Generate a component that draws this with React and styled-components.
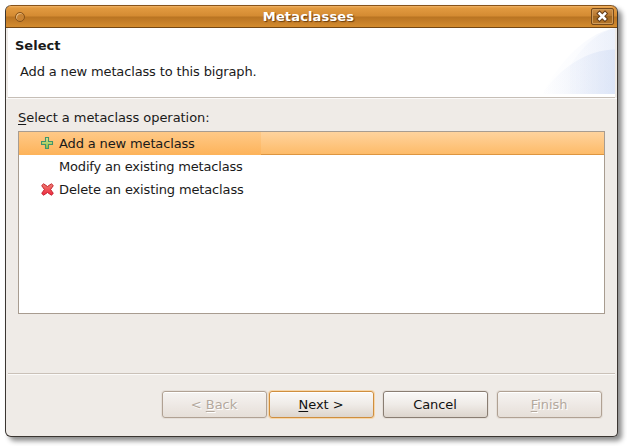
import React from "react";
import styled, { createGlobalStyle } from "styled-components";

const GlobalStyle = createGlobalStyle`
  * { box-sizing: border-box; }
  html, body { margin: 0; background: #fff; overflow: hidden; }
  body { font-family: "DejaVu Sans", sans-serif; font-size: 13px; color: #1a1a1a; }
`;

const Desktop = styled.div`
  width: 627px;
  height: 446px;
  padding: 5px;
`;

const Window = styled.section`
  display: flex;
  flex-direction: column;
  width: 613px;
  height: 432px;
  overflow: hidden;
  background: #efebe7;
  border: 1px solid #3b3632;
  border-top: 0;
  border-radius: 6px 7px 5px 6px;
  box-shadow: 4px 4px 5px rgba(0, 0, 0, 0.45);
`;

const TitleBar = styled.header`
  display: grid;
  grid-template-columns: 30px 1fr 28px;
  align-items: center;
  flex: none;
  height: 23px;
  margin: 0 -1px;
  border: 1px solid #87531a;
  border-bottom-color: #744714;
  border-radius: 6px 7px 0 0;
  background: linear-gradient(#f0b469 0, #e29a40 2px, #d48b32 10px, #b97422 11px, #c67f29 16px, #d48c2e 21px);
`;

const Title = styled.h1`
  margin: 0 8px 0 0;
  text-align: center;
  font-size: 13px;
  line-height: 18px;
  letter-spacing: 0.15px;
  color: #fff;
  text-shadow: 1px 1px 1px #6b3d0d;
`;

const MenuDot = styled.span`
  width: 10px;
  height: 10px;
  margin-left: 9px;
  border: 1px solid #875219;
  border-radius: 50%;
  background: #c98434;
  box-shadow: inset 1px 1px 0 #e9bd80;
`;

const CloseButton = styled.button`
  width: 23px;
  height: 17px;
  margin: 0 0 0 2px;
  padding: 0;
  border: 1px solid #75491a;
  border-radius: 2px;
  background: linear-gradient(#cf9149, #b87830 45%, #9f6721 50%, #b67529);
  box-shadow: inset 0 0 0 1px #cf9a58;
  svg { display: block; margin: 0 auto; }
`;

const Banner = styled.div`
  display: flex;
  flex: none;
  justify-content: space-between;
  height: 70px;
  margin: 0 2px;
  border-bottom: 1px solid #c6beb6;
  background: #fff;
  svg { display: block; }
`;

const Heading = styled.h2`
  margin: 0;
  padding: 9px 0 0 7px;
  font-size: 13px;
  line-height: 17px;
`;

const Description = styled.p`
  margin: 9px 0 0 12px;
  line-height: 17px;
  letter-spacing: -0.14px;
`;

const Body = styled.main`
  flex: none;
  height: 275px;
  padding: 11px 12px 0;
  box-shadow: inset 0 1px #fbfaf9;
`;

const Prompt = styled.div`
  height: 22px;
  line-height: 17px;
  letter-spacing: -0.06px;
`;

const Key = styled.u`
  text-decoration: underline;
  text-decoration-thickness: 1px;
  text-underline-offset: 2px;
`;

const List = styled.ul`
  width: 587px;
  height: 183px;
  margin: 0;
  padding: 0;
  border: 1px solid #a89c90;
  background: #fff;
  list-style: none;
`;

const Row = styled.li`
  display: grid;
  grid-template-columns: 40px 202px 1fr;
  height: 23px;
  line-height: 23px;
  letter-spacing: ${(p) => p.$tracking || "-0.14px"};
  white-space: nowrap;
  background: ${(p) => (p.$selected ? "linear-gradient(#ffc987, #fdb35a)" : "none")};
  svg { display: block; margin: 5px 0 0 22px; }
`;

const SelectionTail = styled.span`
  border-bottom: 1px solid #dd9540;
  background: linear-gradient(#ffd39d, #fdbb69);
`;

const Footer = styled.footer`
  display: flex;
  flex: 1;
  margin: 0 2px;
  padding: 17px 13px 0 0;
  justify-content: flex-end;
  border-top: 1px solid #cac1b8;
  box-shadow: inset 0 1px #fbfaf9;
`;

const Button = styled.button`
  width: 105px;
  height: 27px;
  margin: 0 0 0 ${(p) => p.$gap || 0}px;
  padding: 0 1px 0 0;
  font: inherit;
  line-height: 25px;
  letter-spacing: -0.05px;
  color: #111;
  border: 1px solid ${(p) => (p.$primary ? "#cf8e3e" : "#897d72")};
  border-radius: 3px;
  background: linear-gradient(#faf9f8, #efebe7 50%, #ddd5cd);
  box-shadow: 0 0 0 1px ${(p) => (p.$primary ? "#f6d6aa" : "#e5dfd9")}, inset 0 1px #fff;
  &:disabled {
    color: #b3a89d;
    text-shadow: 1px 1px #fff;
    border-color: #b0a193;
    background: linear-gradient(#f5f3f1, #eee9e5 50%, #e6dfd8);
  }
`;

const CloseIcon = () => (
  <svg width="13" height="13" viewBox="0 0 13 13">
    <path d="M3.5 3.5 9 9M9 3.5 3.5 9" stroke="#68401a" strokeWidth="4.6" strokeLinecap="square" />
    <path d="M3.5 3.5 9 9M9 3.5 3.5 9" stroke="#fff" strokeWidth="2.5" strokeLinecap="square" />
  </svg>
);

const AddIcon = () => (
  <svg width="13" height="13" viewBox="0 0 13 13">
    <defs>
      <linearGradient id="add" x1="0" y1="0" x2="0" y2="1">
        <stop stopColor="#d9e69a" /><stop offset="1" stopColor="#8dbd3c" />
      </linearGradient>
    </defs>
    <path d="M4.5.5h3v4h4v3h-4v4h-3v-4h-4v-3h4z" fill="url(#add)" stroke="#41946b" strokeWidth="1.1" />
  </svg>
);

const DeleteIcon = () => (
  <svg width="13" height="13" viewBox="0 0 13 13">
    <defs>
      <linearGradient id="del" x1="0" y1="0" x2="0" y2="1">
        <stop stopColor="#ee7f70" /><stop offset="1" stopColor="#ef283f" />
      </linearGradient>
    </defs>
    <path d="M2.6.8 6.5 3.5 10.4.8 12.3 2.6 9.6 6.5l2.7 3.9-1.9 1.8-3.9-2.7-3.9 2.7L.7 10.4l2.7-3.9L.7 2.6z" fill="url(#del)" stroke="#c4232f" strokeLinejoin="round" />
  </svg>
);

const BannerArt = () => (
  <svg width="75" height="66" viewBox="0 0 75 66">
    <defs>
      <linearGradient id="art" gradientUnits="userSpaceOnUse" x1="0" x2="75">
        <stop stopColor="#dbe3f6" stopOpacity="0" /><stop offset=".3" stopColor="#dbe3f6" stopOpacity=".16" />
        <stop offset="1" stopColor="#d3def5" stopOpacity=".6" />
      </linearGradient>
      <linearGradient id="haze" gradientUnits="userSpaceOnUse" x1="0" x2="75">
        <stop stopColor="#e5ebf9" stopOpacity="0" /><stop offset=".5" stopColor="#e5ebf9" stopOpacity=".15" />
        <stop offset="1" stopColor="#e2e9f8" stopOpacity=".42" />
      </linearGradient>
    </defs>
    <path d="M2 66C16 40 42 6 75 0V66Z" fill="url(#haze)" />
    <path d="M30 38Q50 6 75 0V66H30Z" fill="url(#haze)" />
    <path d="M2 66C20 40 46 22 75 21.5V66Z" fill="url(#art)" />
  </svg>
);

export default function App() {
  return (
    <Desktop>
      <GlobalStyle />
      <Window>
        <TitleBar>
          <MenuDot />
          <Title>Metaclasses</Title>
          <CloseButton aria-label="Close"><CloseIcon /></CloseButton>
        </TitleBar>
        <Banner>
          <div>
            <Heading>Select</Heading>
            <Description>Add a new metaclass to this bigraph.</Description>
          </div>
          <BannerArt />
        </Banner>
        <Body>
          <Prompt><Key>S</Key>elect a metaclass operation:</Prompt>
          <List>
            <Row $selected><AddIcon /><span>Add a new metaclass</span><SelectionTail /></Row>
            <Row $tracking="-0.18px"><span /><span>Modify an existing metaclass</span></Row>
            <Row $tracking="-0.13px"><DeleteIcon /><span>Delete an existing metaclass</span></Row>
          </List>
        </Body>
        <Footer>
          <Button disabled>&lt; <Key>B</Key>ack</Button>
          <Button $primary $gap={2}><Key>N</Key>ext &gt;</Button>
          <Button $gap={9}>Cancel</Button>
          <Button disabled $gap={9}><Key>F</Key>inish</Button>
        </Footer>
      </Window>
    </Desktop>
  );
}
